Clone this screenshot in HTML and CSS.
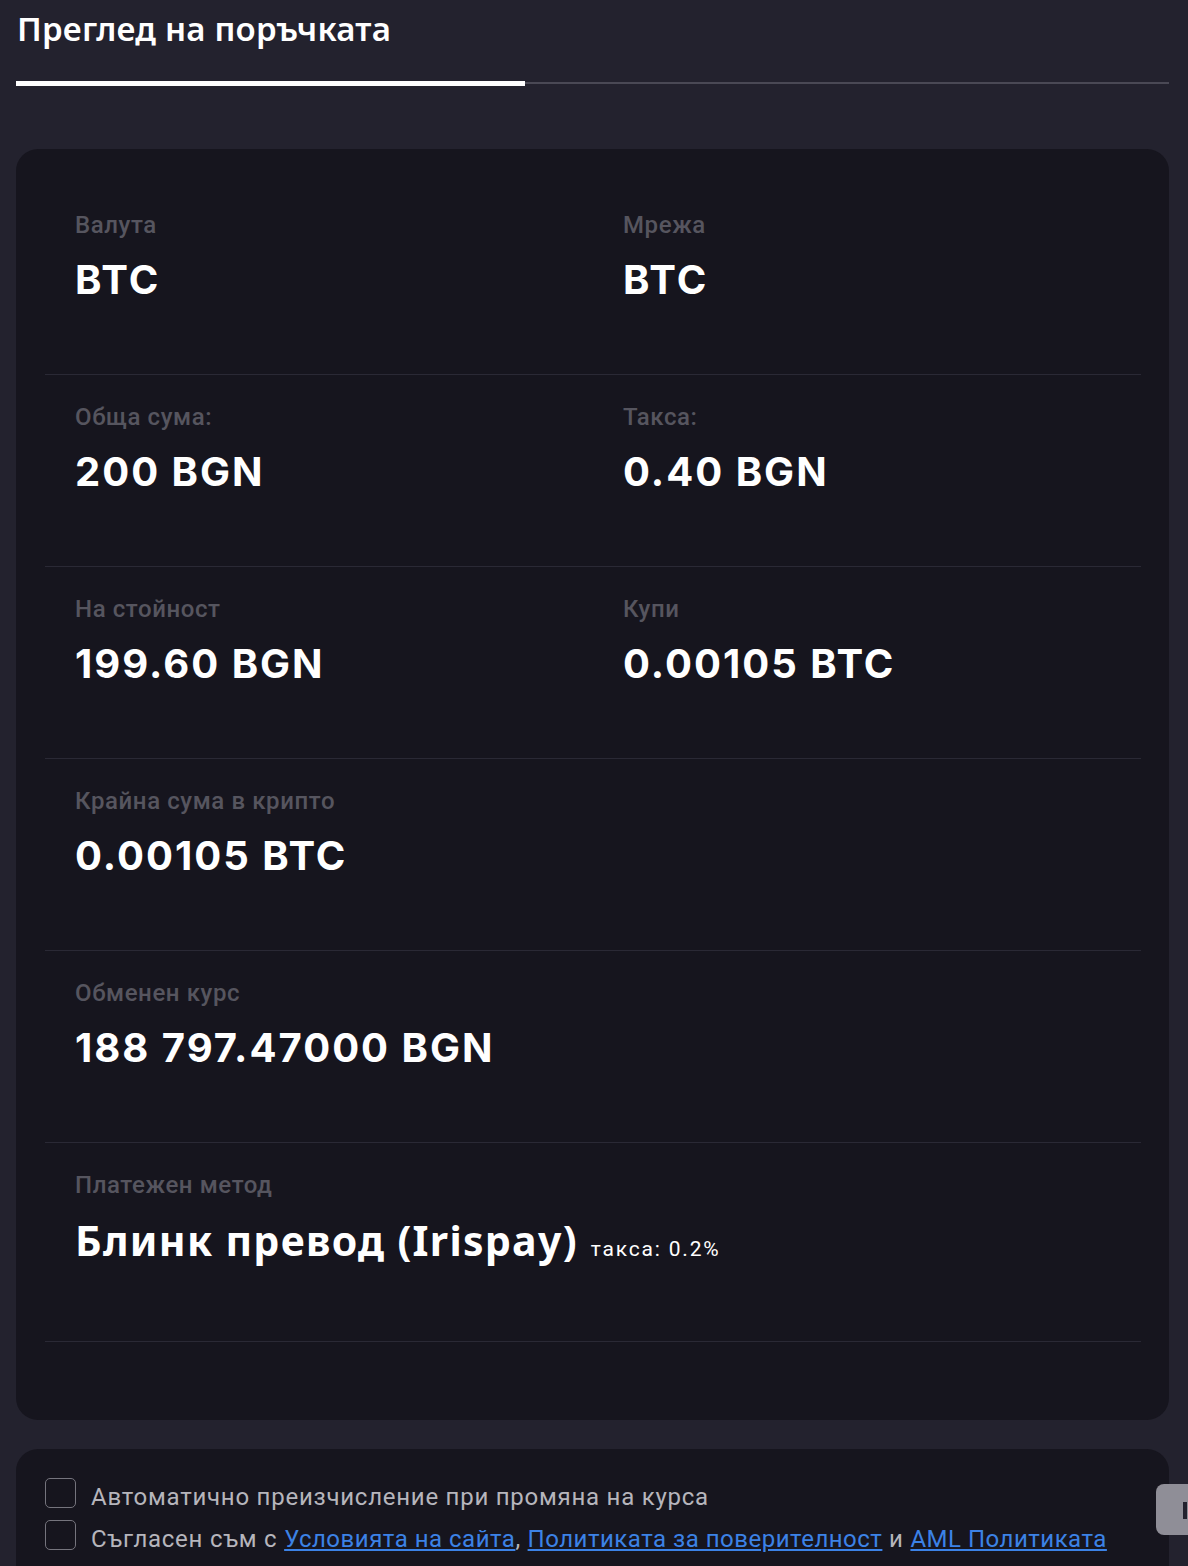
FILE: index.html
```html
<!DOCTYPE html>
<html lang="bg">

<head>
    <meta charset="UTF-8">
    <meta name="viewport" content="width=device-width, initial-scale=1.0">
    <title>Преглед на поръчката</title>
    <link rel="stylesheet" href="styles.css">
</head>

<body>
    <div id="page">
        <div class="tabs">
            <div class="tab active">Преглед на поръчката</div>
        </div>

        <div class="card summary">
            <div class="row">
                <div class="cell">
                    <div class="label">Валута</div>
                    <div class="value">BTC</div>
                </div>
                <div class="cell">
                    <div class="label">Мрежа</div>
                    <div class="value">BTC</div>
                </div>
            </div>
            <div class="row">
                <div class="cell">
                    <div class="label">Обща сума:</div>
                    <div class="value">200 BGN</div>
                </div>
                <div class="cell">
                    <div class="label">Такса:</div>
                    <div class="value">0.40 BGN</div>
                </div>
            </div>
            <div class="row">
                <div class="cell">
                    <div class="label">На стойност</div>
                    <div class="value">199.60 BGN</div>
                </div>
                <div class="cell">
                    <div class="label">Купи</div>
                    <div class="value">0.00105 BTC</div>
                </div>
            </div>
            <div class="row">
                <div class="cell">
                    <div class="label">Крайна сума в крипто</div>
                    <div class="value">0.00105 BTC</div>
                </div>
            </div>
            <div class="row">
                <div class="cell">
                    <div class="label">Обменен курс</div>
                    <div class="value">188 797.47000 BGN</div>
                </div>
            </div>
            <div class="row last">
                <div class="cell">
                    <div class="label">Платежен метод</div>
                    <div class="value method">Блинк превод (Irispay) <span class="fee">такса: 0.2%</span></div>
                </div>
            </div>
        </div>

        <div class="card terms">
            <label class="check">
                <span class="box"></span>
                <span class="text">Автоматично преизчисление при промяна на курса</span>
            </label>
            <label class="check">
                <span class="box"></span>
                <span class="text">Съгласен съм с <a href="#">Условията на сайта</a>, <a href="#">Политиката за поверителност</a> и <a href="#">AML Политиката</a></span>
            </label>
        </div>
    </div>

    <div id="side-btn"><span class="bar"></span></div>
</body>

</html>
```

FILE: styles.css
```css
* {
    margin: 0;
    padding: 0;
    box-sizing: border-box;
}

html,
body {
    background: #23222e;
    overflow-x: hidden;
}

body {
    font-family: Roboto, "Noto Sans", sans-serif;
    color: #fff;
}

#page {
    padding: 0 19px 0 16px;
}

.tabs {
    display: flex;
    border-bottom: 2px solid #4a4955;
}

.tab {
    width: 509px;
    padding: 9px 0 0 1px;
    height: 86px;
    margin-bottom: -4px;
    font-family: "Noto Sans", Roboto, sans-serif;
    font-size: 33px;
    line-height: 40px;
    font-weight: 600;
    letter-spacing: 0.2px;
}

.tab.active {
    border-bottom: 5px solid #fff;
}

.card {
    background: #16151e;
    border-radius: 22px;
}

.summary {
    margin-top: 65px;
    padding: 34px 28px 78px 29px;
}

.row {
    display: flex;
    height: 192px;
    border-bottom: 1px solid #2a2935;
}

.row.last {
    height: 199px;
}

.cell {
    width: 50%;
    padding: 28px 30px 0;
}

.label {
    font-size: 24px;
    line-height: 28px;
    font-weight: 500;
    letter-spacing: 0.6px;
    color: #56555f;
}

.value {
    margin-top: 17px;
    font-family: Inter, Roboto, sans-serif;
    font-size: 40px;
    line-height: 48px;
    font-weight: 700;
    letter-spacing: 2px;
    white-space: nowrap;
}

.value.method {
    font-family: "Noto Sans", Roboto, sans-serif;
    font-size: 41px;
    letter-spacing: 1.3px;
    margin-top: 17px;
}

.fee {
    font-family: Roboto, sans-serif;
    font-size: 21px;
    font-weight: 400;
    letter-spacing: 1.8px;
    margin-left: 1px;
}

.terms {
    margin-top: 29px;
    padding: 29px 29px 40px;
}

.check {
    display: flex;
    align-items: center;
    gap: 15px;
    height: 30px;
    font-size: 24px;
    line-height: 30px;
    letter-spacing: 0.75px;
    color: #b6b5bc;
    margin-bottom: 12px;
    white-space: nowrap;
}

.check .text {
    margin-top: 7px;
}

.check a {
    color: #3c82e6;
    letter-spacing: 0.5px;
}

.box {
    width: 31px;
    height: 30px;
    border: 1px solid #75747d;
    border-radius: 5px;
    flex: none;
}

#side-btn {
    position: absolute;
    left: 1156px;
    top: 1484px;
    width: 120px;
    height: 51px;
    background: #8f8e97;
    border-radius: 8px;
    padding: 18px 0 0 27px;
}

#side-btn .bar {
    display: block;
    width: 4px;
    height: 17px;
    background: #23222e;
}
```
